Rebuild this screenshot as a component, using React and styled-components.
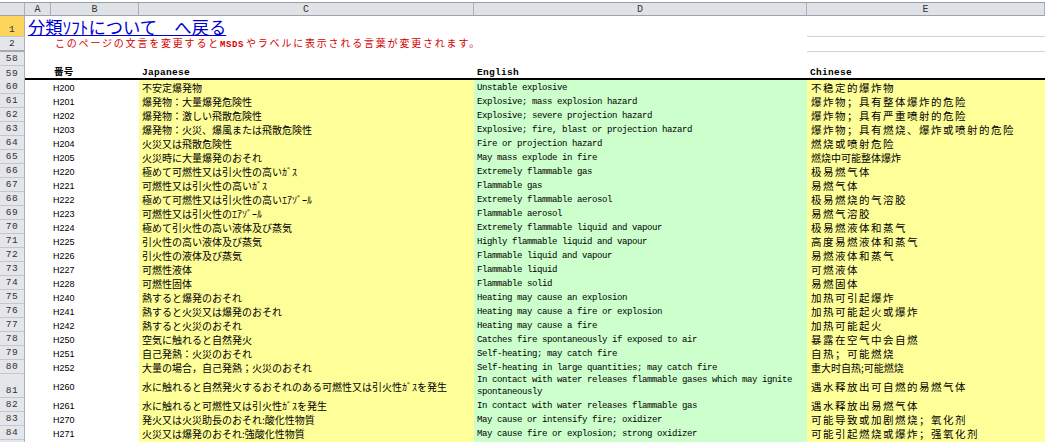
import React from 'react';
import styled, { createGlobalStyle } from 'styled-components';

const ROWS = [
  [60, 'H200', '不安定爆発物', 'Unstable explosive', '不稳定的爆炸物'],
  [61, 'H201', '爆発物：大量爆発危険性', 'Explosive; mass explosion hazard', '爆炸物；具有整体爆炸的危险'],
  [62, 'H202', '爆発物：激しい飛散危険性', 'Explosive; severe projection hazard', '爆炸物；具有严重喷射的危险'],
  [63, 'H203', '爆発物：火災、爆風または飛散危険性', 'Explosive; fire, blast or projection hazard', '爆炸物；具有燃烧、爆炸或喷射的危险'],
  [64, 'H204', '火災又は飛散危険性', 'Fire or projection hazard', '燃烧或喷射危险'],
  [65, 'H205', '火災時に大量爆発のおそれ', 'May mass explode in fire', '燃烧中可能整体爆炸', true],
  [66, 'H220', '極めて可燃性又は引火性の高いｶﾞｽ', 'Extremely flammable gas', '极易燃气体'],
  [67, 'H221', '可燃性又は引火性の高いｶﾞｽ', 'Flammable gas', '易燃气体'],
  [68, 'H222', '極めて可燃性又は引火性の高いｴｱｿﾞｰﾙ', 'Extremely flammable aerosol', '极易燃烧的气溶胶'],
  [69, 'H223', '可燃性又は引火性のｴｱｿﾞｰﾙ', 'Flammable aerosol', '易燃气溶胶'],
  [70, 'H224', '極めて引火性の高い液体及び蒸気', 'Extremely flammable liquid and vapour', '极易燃液体和蒸气'],
  [71, 'H225', '引火性の高い液体及び蒸気', 'Highly flammable liquid and vapour', '高度易燃液体和蒸气'],
  [72, 'H226', '引火性の液体及び蒸気', 'Flammable liquid and vapour', '易燃液体和蒸气'],
  [73, 'H227', '可燃性液体', 'Flammable liquid', '可燃液体'],
  [74, 'H228', '可燃性固体', 'Flammable solid', '易燃固体'],
  [75, 'H240', '熱すると爆発のおそれ', 'Heating may cause an explosion', '加热可引起爆炸'],
  [76, 'H241', '熱すると火災又は爆発のおそれ', 'Heating may cause a fire or explosion', '加热可能起火或爆炸'],
  [77, 'H242', '熱すると火災のおそれ', 'Heating may cause a fire', '加热可能起火'],
  [78, 'H250', '空気に触れると自然発火', 'Catches fire spontaneously if exposed to air', '暴露在空气中会自燃'],
  [79, 'H251', '自己発熱：火災のおそれ', 'Self-heating; may catch fire', '自热；可能燃烧'],
  [80, 'H252', '大量の場合，自己発熱；火災のおそれ', 'Self-heating in large quantities; may catch fire', '重大时自热;可能燃烧', true],
  [81, 'H260', '水に触れると自然発火するおそれのある可燃性又は引火性ｶﾞｽを発生', 'In contact with water releases flammable gases which may ignite spontaneously', '遇水释放出可自燃的易燃气体'],
  [82, 'H261', '水に触れると可燃性又は引火性ｶﾞｽを発生', 'In contact with water releases flammable gas', '遇水释放出易燃气体'],
  [83, 'H270', '発火又は火災助長のおそれ:酸化性物質', 'May cause or intensify fire; oxidizer', '可能导致或加剧燃烧；氧化剂'],
  [84, 'H271', '火災又は爆発のおそれ:強酸化性物質', 'May cause fire or explosion; strong oxidizer', '可能引起燃烧或爆炸；强氧化剂'],
];

const GlobalStyle = createGlobalStyle`
  html, body {
    margin: 0;
    padding: 0;
    background: #fff;
  }
`;

const Sheet = styled.div`
  width: 1045px;
  height: 442px;
  overflow: hidden;
  background: #fff;
  font-family: "Liberation Mono", "Noto Sans CJK JP", monospace;
  color: #000;
`;

const TopEdge = styled.div`
  height: 2px;
  background: #fff;
  border-bottom: 1px solid #9a9da3;
`;

const Row = styled.div`
  display: grid;
  grid-template-columns: 25px 26px 88px 335px 333px 238px;
  height: ${props => props.$height || 14}px;
  border-bottom: ${props => props.$heavy ? '2px solid #000' : 'none'};
  box-sizing: border-box;
`;

const ColumnHeader = styled.div`
  display: flex;
  align-items: center;
  justify-content: center;
  background: #dfe2e7;
  border-right: 1px solid #a9b0ba;
  border-bottom: 1px solid #9da3ac;
  font-size: 10px;
  color: #333;
`;

const RowHeader = styled.div`
  display: flex;
  align-items: flex-end;
  justify-content: center;
  margin-bottom: ${props => props.$heavy ? '-2px' : '0'};
  background: ${props => props.$selected ? '#fbd45c' : '#e4e6ea'};
  border-right: 1px solid #a9b0ba;
  border-bottom: ${props => props.$break ? '2px solid #a6a9ae' : '1px solid #c4c8ce'};
  box-sizing: border-box;
  font-size: 9.5px;
  letter-spacing: 0.5px;
  line-height: 13px;
  color: #333;
`;

const Title = styled.div`
  grid-column: 2 / 6;
  display: flex;
  align-items: flex-end;
  padding: 0 0 0 3px;
  font-family: "Noto Sans CJK JP", sans-serif;
  font-size: 17.3px;
  line-height: 20px;
  white-space: pre;
`;

const TitleLink = styled.a`
  color: #0000d4;
  text-decoration: underline;
`;

const Notice = styled.div`
  grid-column: 2 / 6;
  padding: 1px 0 0 30px;
  font-family: "Liberation Mono", "Noto Sans CJK JP", sans-serif;
  font-size: 10px;
  line-height: 14px;
  letter-spacing: 1.8px;
  color: #d40000;
  white-space: pre;
`;

const NoticeLatin = styled.span`
  margin-right: 2px;
  font-size: 9px;
  font-weight: 700;
  letter-spacing: 0.6px;
`;

const EdgeLine = styled.div`
  grid-column: 6;
  border-bottom: 1px solid #d4d4d4;
`;

const Label = styled.div`
  padding-left: 3px;
  font-size: 9.5px;
  font-weight: 700;
  letter-spacing: 0.3px;
  line-height: 13px;
  white-space: pre;
`;

const Code = styled.div`
  display: flex;
  align-items: center;
  padding: 1px 0 0 2px;
  font-family: "Liberation Sans", sans-serif;
  font-size: 9px;
`;

const Spacer = styled.div``;

const JapaneseCell = styled.div`
  display: flex;
  align-items: center;
  padding-left: 3px;
  background: #ffff99;
  font-family: "Noto Sans CJK JP", sans-serif;
  font-size: 10px;
  white-space: pre;
  overflow: hidden;
`;

const EnglishCell = styled.div`
  display: flex;
  align-items: center;
  padding: ${props => props.$wrapped ? '0 3px' : '2px 3px 0'};
  background: #ccffcc;
  font-size: 9px;
  letter-spacing: -0.4px;
  line-height: 12px;
`;

const ChineseCell = styled.div`
  display: flex;
  align-items: center;
  padding-left: 4px;
  background: #ffff99;
  font-family: "Noto Sans CJK SC", sans-serif;
  font-size: ${props => props.$tight ? '10px' : '10.5px'};
  letter-spacing: ${props => props.$tight ? '0' : '1.5px'};
  white-space: pre;
  overflow: hidden;
`;

const App = () => (
  <Sheet>
    <GlobalStyle />
    <TopEdge />
    <Row $height={13}>
      <ColumnHeader />
      <ColumnHeader>A</ColumnHeader>
      <ColumnHeader>B</ColumnHeader>
      <ColumnHeader>C</ColumnHeader>
      <ColumnHeader>D</ColumnHeader>
      <ColumnHeader>E</ColumnHeader>
    </Row>
    <Row $height={21}>
      <RowHeader $selected>1</RowHeader>
      <Title>
        <TitleLink href="#">分類ｿﾌﾄについて　へ戻る</TitleLink>
      </Title>
      <EdgeLine />
    </Row>
    <Row $height={15}>
      <RowHeader $break>2</RowHeader>
      <Notice>
        このページの文言を変更すると<NoticeLatin>MSDS</NoticeLatin>やラベルに表示される言葉が変更されます。
      </Notice>
      <EdgeLine />
    </Row>
    <Row>
      <RowHeader>58</RowHeader>
    </Row>
    <Row $heavy>
      <RowHeader $heavy>59</RowHeader>
      <Spacer />
      <Label>番号</Label>
      <Label>Japanese</Label>
      <Label>English</Label>
      <Label>Chinese</Label>
    </Row>
    {ROWS.map(([num, code, ja, en, zh, tight]) => (
      <Row key={num} $height={num === 81 ? 24 : 14}>
        <RowHeader>{num}</RowHeader>
        <Spacer />
        <Code>{code}</Code>
        <JapaneseCell>{ja}</JapaneseCell>
        <EnglishCell $wrapped={num === 81}>{en}</EnglishCell>
        <ChineseCell $tight={tight}>{zh}</ChineseCell>
      </Row>
    ))}
    <Row>
      <RowHeader />
      <Spacer />
      <Spacer />
      <JapaneseCell />
      <EnglishCell />
      <ChineseCell />
    </Row>
  </Sheet>
);

export default App;
